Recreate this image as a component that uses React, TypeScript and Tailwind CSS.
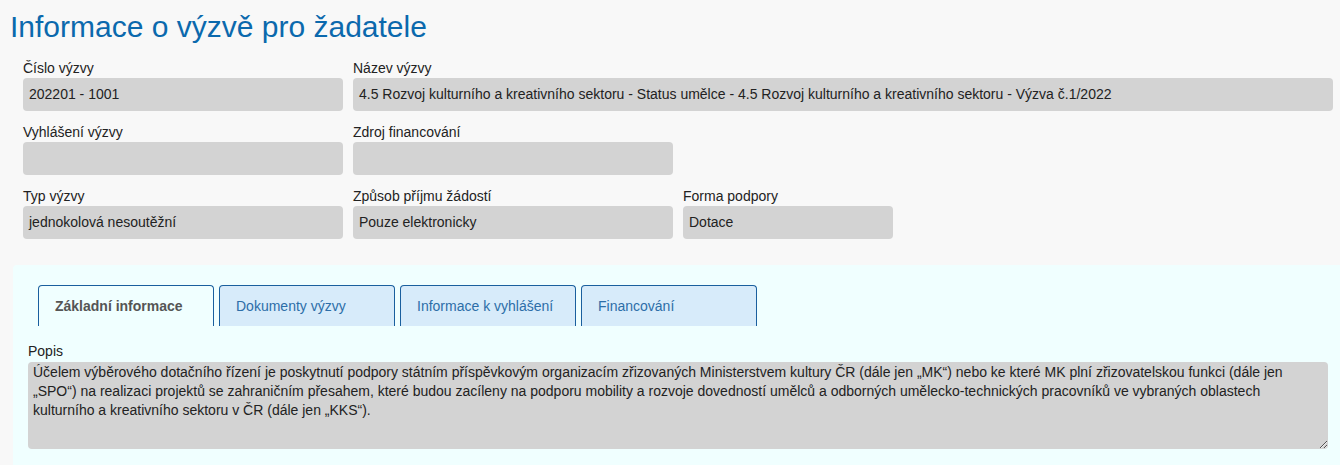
import React from "react";

const ROWS = [
  [
    { label: "Číslo výzvy", value: "202201 - 1001", w: "w-[320px]" },
    {
      label: "Název výzvy",
      value:
        "4.5 Rozvoj kulturního a kreativního sektoru - Status umělce - 4.5 Rozvoj kulturního a kreativního sektoru - Výzva č.1/2022",
      w: "flex-1",
    },
  ],
  [
    { label: "Vyhlášení výzvy", value: "", w: "w-[320px]" },
    { label: "Zdroj financování", value: "", w: "w-[320px]" },
  ],
  [
    { label: "Typ výzvy", value: "jednokolová nesoutěžní", w: "w-[320px]" },
    { label: "Způsob příjmu žádostí", value: "Pouze elektronicky", w: "w-[320px]" },
    { label: "Forma podpory", value: "Dotace", w: "w-[210px]" },
  ],
];

const TABS = ["Základní informace", "Dokumenty výzvy", "Informace k vyhlášení", "Financování"];

const POPIS =
  "Účelem výběrového dotačního řízení je poskytnutí podpory státním příspěvkovým organizacím zřizovaných Ministerstvem kultury ČR (dále jen „MK“) nebo ke které MK plní zřizovatelskou funkci (dále jen „SPO“) na realizaci projektů se zahraničním přesahem, které budou zacíleny na podporu mobility a rozvoje dovedností umělců a odborných umělecko-technických pracovníků ve vybraných oblastech kulturního a kreativního sektoru v ČR (dále jen „KKS“).";

function Field({ label, value, w }: { label: string; value: string; w: string }) {
  return (
    <div className={w}>
      <div className="text-[14px] leading-[16px] text-[#222] mb-[2px]">{label}</div>
      <div className="h-[33px] rounded-[4px] bg-[#d3d3d3] px-[6px] flex items-center text-[14px] text-[#222] whitespace-nowrap overflow-hidden">
        {value}
      </div>
    </div>
  );
}

export default function App() {
  return (
    <div className="min-h-screen bg-[#f8f8f8] font-['Liberation_Sans',Arial,sans-serif] overflow-hidden">
      <h1 className="pt-[10px] pl-[10px] text-[30px] leading-[34px] text-[#0b69ad]">
        Informace o výzvě pro žadatele
      </h1>

      {/* Call summary fields */}
      <div className="mt-[16px] pl-[23px] pr-[7px] flex flex-col gap-[13px]">
        {ROWS.map((row, i) => (
          <div key={i} className="flex gap-[10px]">
            {row.map((f) => (
              <Field key={f.label} {...f} />
            ))}
          </div>
        ))}
      </div>

      {/* Tabs panel */}
      <div className="mt-[26px] ml-[13px] rounded-tl-[4px] bg-[#f0ffff] pt-[20px] pl-[15px] pr-[12px] pb-[30px]">
        <div className="flex gap-[5px] pl-[10px]">
          {TABS.map((t, i) => (
            <div
              key={t}
              className={
                i === 0
                  ? "w-[176px] h-[41px] flex items-center pl-[16px] border border-b-0 border-[#1a5f9e] rounded-t-[4px] bg-[#f0ffff] text-[14px] font-bold text-[#555]"
                  : "w-[176px] h-[41px] flex items-center pl-[16px] border border-b-0 border-[#1a5f9e] rounded-t-[4px] bg-[#d7ebfa] text-[14px] text-[#2d6ea8]"
              }
            >
              {t}
            </div>
          ))}
        </div>

        <div className="mt-[17px] text-[14px] leading-[16px] text-[#222] mb-[3px]">Popis</div>
        <textarea
          readOnly
          defaultValue={POPIS}
          className="block w-[1300px] h-[87px] rounded-[4px] bg-[#d3d3d3] px-[5px] pt-[1px] text-[14px] leading-[19px] text-[#222] outline-none font-['Liberation_Sans',Arial,sans-serif]"
        />
      </div>
    </div>
  );
}
